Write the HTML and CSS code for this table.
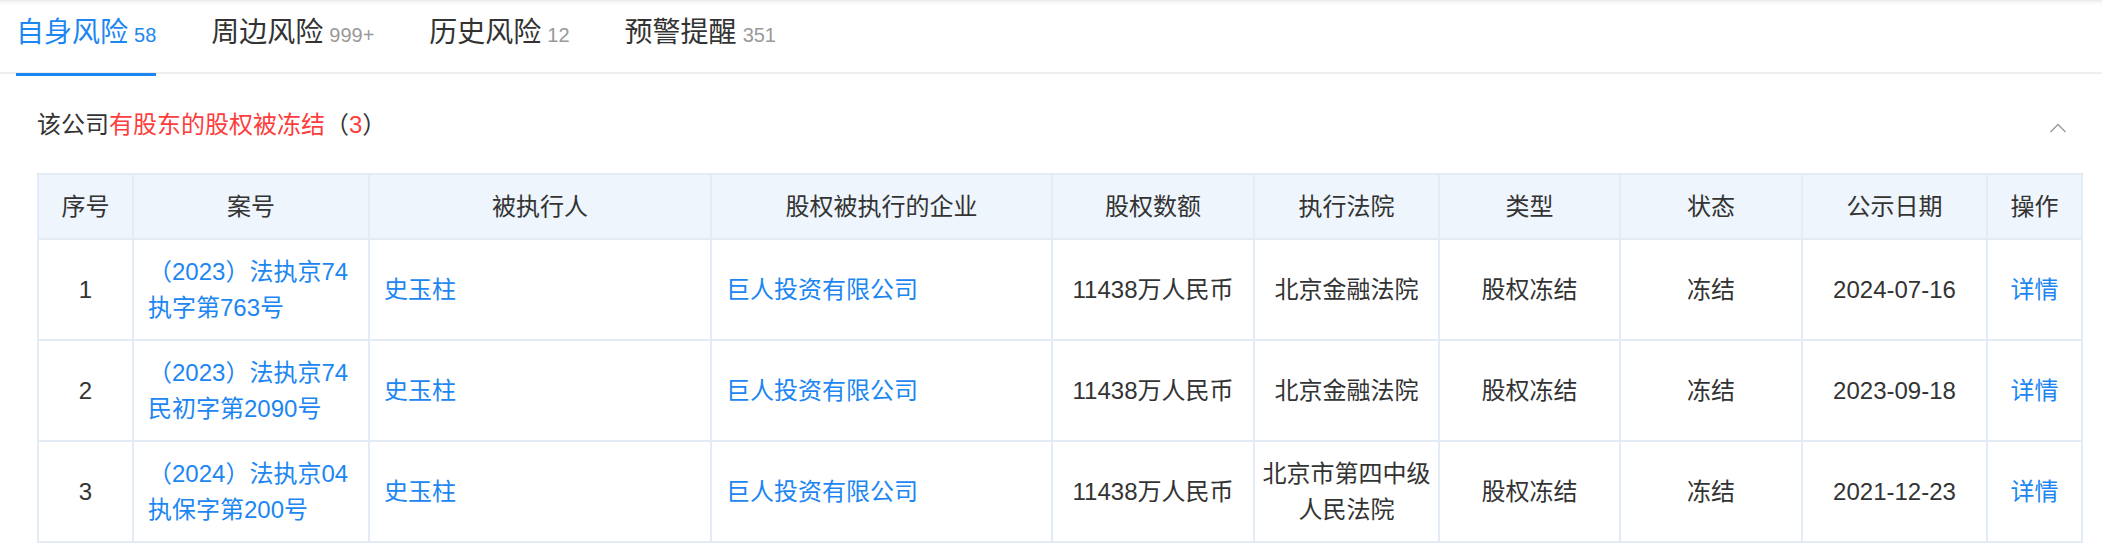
FILE: index.html
```html
<!DOCTYPE html>
<html lang="zh-CN">
<head>
<meta charset="utf-8">
<title>自身风险</title>
<link rel="stylesheet" href="styles.css">
</head>
<body>
<div class="tabs">
  <div class="tab active">自身风险<span class="count">58</span></div>
  <div class="tab">周边风险<span class="count">999+</span></div>
  <div class="tab">历史风险<span class="count">12</span></div>
  <div class="tab">预警提醒<span class="count">351</span></div>
</div>
<div class="section">
  <div class="section-head">
    <div class="title">该公司<span class="red">有股东的股权被冻结</span>（<span class="red">3</span>）</div>
    <svg class="chevron" width="18" height="10" viewBox="0 0 18 10"><polyline points="1.5,9 9,1.5 16.5,9" fill="none" stroke="#9a9a9a" stroke-width="1.4"/></svg>
  </div>
  <table class="grid">
    <colgroup>
      <col class="w95"><col class="w236"><col class="w342"><col class="w341"><col class="w202"><col class="w185"><col class="w181"><col class="w182"><col class="w185"><col class="w95">
    </colgroup>
    <thead>
      <tr><th>序号</th><th>案号</th><th>被执行人</th><th>股权被执行的企业</th><th>股权数额</th><th>执行法院</th><th>类型</th><th>状态</th><th>公示日期</th><th>操作</th></tr>
    </thead>
    <tbody>
      <tr>
        <td class="c">1</td>
        <td class="l link">（2023）法执京74执字第763号</td>
        <td class="l link">史玉柱</td>
        <td class="l link">巨人投资有限公司</td>
        <td class="c">11438万人民币</td>
        <td class="c court">北京金融法院</td>
        <td class="c">股权冻结</td>
        <td class="c">冻结</td>
        <td class="c">2024-07-16</td>
        <td class="c link">详情</td>
      </tr>
      <tr>
        <td class="c">2</td>
        <td class="l link">（2023）法执京74民初字第2090号</td>
        <td class="l link">史玉柱</td>
        <td class="l link">巨人投资有限公司</td>
        <td class="c">11438万人民币</td>
        <td class="c court">北京金融法院</td>
        <td class="c">股权冻结</td>
        <td class="c">冻结</td>
        <td class="c">2023-09-18</td>
        <td class="c link">详情</td>
      </tr>
      <tr>
        <td class="c">3</td>
        <td class="l link">（2024）法执京04执保字第200号</td>
        <td class="l link">史玉柱</td>
        <td class="l link">巨人投资有限公司</td>
        <td class="c">11438万人民币</td>
        <td class="c court">北京市第四中级人民法院</td>
        <td class="c">股权冻结</td>
        <td class="c">冻结</td>
        <td class="c">2021-12-23</td>
        <td class="c link">详情</td>
      </tr>
    </tbody>
  </table>
</div>
</body>
</html>
```
FILE: styles.css
```css
* { box-sizing: border-box; }
html, body { margin: 0; padding: 0; background: #fff; }
body {
  font-family: "Liberation Sans", "Noto Sans CJK SC", sans-serif;
  color: #333;
  width: 2102px;
}
.tabs {
  display: flex;
  align-items: flex-start;
  gap: 55px;
  height: 74px;
  padding-left: 16px;
  border-bottom: 2px solid #efefef;
  background: linear-gradient(#e9e9e9 0, #f6f6f6 2px, #fff 5px);
}
.tab {
  position: relative;
  margin-top: 13px;
  font-size: 28px;
  line-height: 40px;
  color: #333;
  white-space: nowrap;
}
.tab .count {
  font-size: 20px;
  color: #999;
  margin-left: 6px;
}
.tab.active, .tab.active .count { color: #1c86f2; }
.tab.active::after {
  content: "";
  position: absolute;
  left: 0;
  right: 0;
  top: 60px;
  height: 3px;
  background: #1c86f2;
}
.section {
  padding: 0 19px 0 37px;
}
.section-head {
  display: flex;
  justify-content: space-between;
  align-items: center;
  padding-top: 33px;
  margin-bottom: 30px;
}
.title {
  font-size: 24px;
  line-height: 36px;
  color: #333;
}
.red { color: #fd3d3d; }
.chevron {
  margin-right: 16px;
  margin-top: 6px;
}
.grid {
  width: 100%;
  table-layout: fixed;
  border-collapse: separate;
  border-spacing: 0;
  border-top: 2px solid #e3ebf5;
  border-left: 2px solid #e3ebf5;
  font-size: 24px;
  line-height: 36px;
}
.w95 { width: 95px; }
.w236 { width: 236px; }
.w342 { width: 342px; }
.w341 { width: 341px; }
.w202 { width: 202px; }
.w185 { width: 185px; }
.w181 { width: 181px; }
.w182 { width: 182px; }
.grid th, .grid td {
  border-right: 2px solid #e3ebf5;
  border-bottom: 2px solid #e3ebf5;
  padding: 13.5px 14px;
  font-weight: 400;
  vertical-align: middle;
}
.grid th {
  background: #eef5fc;
  text-align: center;
  color: #333;
}
.grid td.c { text-align: center; }
.grid td.l { text-align: left; }
.grid td.court { padding-left: 6px; padding-right: 6px; }
.link { color: #1c86f2; }
```
